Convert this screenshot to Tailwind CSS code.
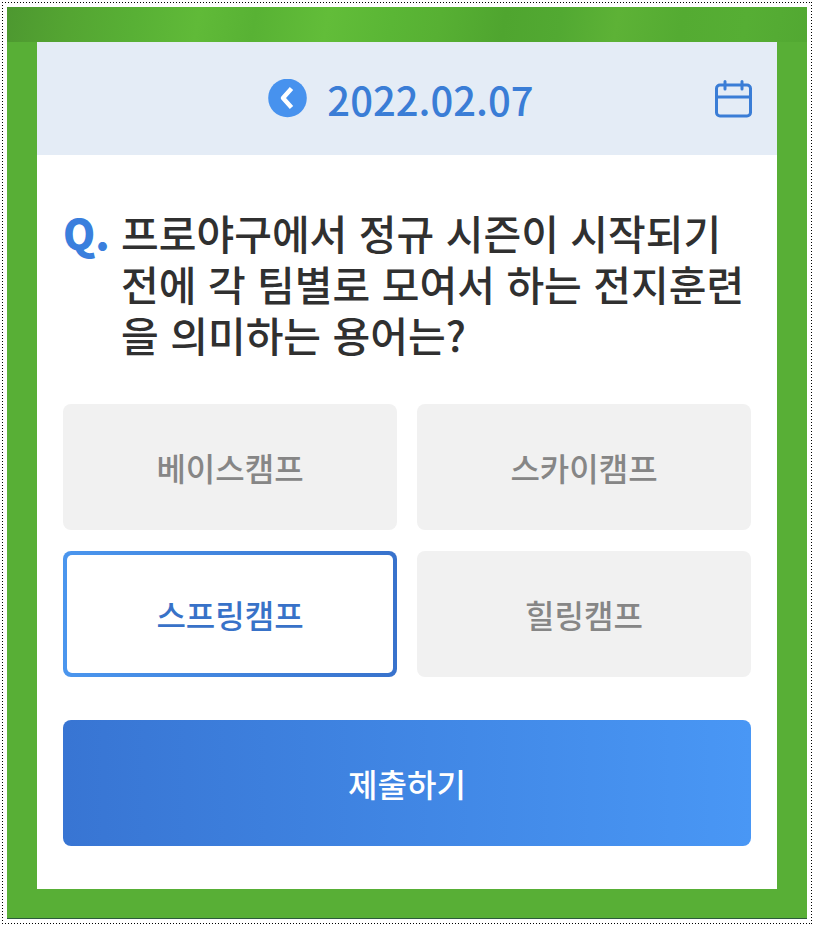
<!DOCTYPE html>
<html lang="ko">
<head>
  <meta charset="UTF-8" />
  <meta name="viewport" content="width=device-width, initial-scale=1.0" />
  <title>오늘의 퀴즈</title>
  <script src="https://cdn.jsdelivr.net/npm/@tailwindcss/browser@4"></script>
</head>
<body class="bg-white p-[2px] font-['Noto_Sans_CJK_KR',sans-serif] font-medium text-[#303030]">
  <!-- dotted frame -->
  <div class="bg-[repeating-linear-gradient(90deg,#000_0_1px,transparent_1px_3px),repeating-linear-gradient(90deg,#000_0_1px,transparent_1px_3px),repeating-linear-gradient(180deg,#000_0_1px,transparent_1px_3px),repeating-linear-gradient(180deg,#000_0_1px,transparent_1px_3px)] bg-[size:100%_1px,100%_1px,1px_100%,1px_100%] bg-[position:top,bottom,left,right] bg-no-repeat p-[5px]">
    <main class="relative border-b border-[#2c5a3c] bg-[#58af36] px-[30px] pt-[35px] pb-[29px]">
      <!-- grass strip -->
      <div class="absolute inset-x-0 top-0 h-[35px] bg-[linear-gradient(100deg,#4d9830_0%,#54a532_8%,#58b035_16%,#60ba38_24%,#58b234_31%,#62bd39_40%,#5ab635_48%,#57b033_54%,#4fa52f_62%,#52a932_69%,#5db236_76%,#54ab32_84%,#56ae34_92%,#52a832_100%)]"></div>

      <section class="relative bg-white">
        <header class="flex h-[113px] items-center bg-[#e4ecf6] px-[25px]">
          <span class="w-10"></span>
          <div class="flex flex-1 items-center justify-center gap-5 pr-[14px]">
            <button type="button" aria-label="이전 날짜" class="size-[39px]">
              <svg viewBox="0 0 39 39" class="size-full" fill="none">
                <circle cx="19.5" cy="19" r="19.3" fill="#4792ee" />
                <path d="M23.5 9.500L15 19L23.5 28.500" stroke="#fff" stroke-width="4.5" stroke-linejoin="round" />
              </svg>
            </button>
            <time datetime="2022-02-07" class="text-[40px] leading-[48px] font-medium text-[#3a7dd6]">2022.02.07</time>
          </div>
          <button type="button" aria-label="달력" class="size-[38px]">
            <svg viewBox="0 0 38 38" class="size-full" fill="none" stroke="#3a7dd6" stroke-width="3" stroke-linecap="round">
              <rect x="2.5" y="5" width="34" height="31" rx="3.5" />
              <path d="M2.5 17H36.5M11 1.5V9M28 1.5V9" />
            </svg>
          </button>
        </header>

        <form class="px-[26px] pt-[52px] pb-[43px]">
          <fieldset>
            <legend class="flex w-full">
              <span class="w-[58px] shrink-0 text-[41px] leading-[51px] font-black text-[#3a7fdd]">Q.</span>
              <span class="text-[41px] leading-[51px]">프로야구에서 정규 시즌이 시작되기<br />전에 각 팀별로 모여서 하는 전지훈련<br />을 의미하는 용어는?</span>
            </legend>

            <div class="mt-11 grid grid-cols-2 gap-x-5 gap-y-[21px] text-[32px] text-[#868686]">
              <label class="h-[126px] cursor-pointer rounded-lg bg-[#f1f1f1] p-1 has-checked:bg-linear-to-r has-checked:from-[#4b96ee] has-checked:to-[#3872cc] has-checked:text-[#3872c8]">
                <input type="radio" name="answer" value="1" class="peer sr-only" />
                <span class="flex h-full items-center justify-center rounded-[5px] peer-checked:bg-white">베이스캠프</span>
              </label>
              <label class="h-[126px] cursor-pointer rounded-lg bg-[#f1f1f1] p-1 has-checked:bg-linear-to-r has-checked:from-[#4b96ee] has-checked:to-[#3872cc] has-checked:text-[#3872c8]">
                <input type="radio" name="answer" value="2" class="peer sr-only" />
                <span class="flex h-full items-center justify-center rounded-[5px] peer-checked:bg-white">스카이캠프</span>
              </label>
              <label class="h-[126px] cursor-pointer rounded-lg bg-[#f1f1f1] p-1 has-checked:bg-linear-to-r has-checked:from-[#4b96ee] has-checked:to-[#3872cc] has-checked:text-[#3872c8]">
                <input type="radio" name="answer" value="3" class="peer sr-only" checked />
                <span class="flex h-full items-center justify-center rounded-[5px] peer-checked:bg-white">스프링캠프</span>
              </label>
              <label class="h-[126px] cursor-pointer rounded-lg bg-[#f1f1f1] p-1 has-checked:bg-linear-to-r has-checked:from-[#4b96ee] has-checked:to-[#3872cc] has-checked:text-[#3872c8]">
                <input type="radio" name="answer" value="4" class="peer sr-only" />
                <span class="flex h-full items-center justify-center rounded-[5px] peer-checked:bg-white">힐링캠프</span>
              </label>
            </div>
          </fieldset>

          <button type="button" class="mt-[43px] h-[126px] w-full rounded-lg bg-linear-to-r from-[#3875d3] to-[#4997f5] text-[32px] text-white">제출하기</button>
        </form>
      </section>
    </main>
  </div>
</body>
</html>
